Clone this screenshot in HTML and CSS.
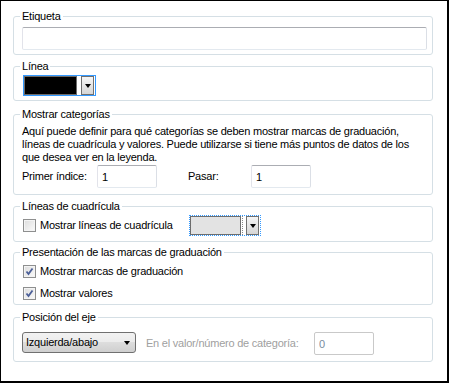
FILE: index.html
```html
<!DOCTYPE html>
<html lang="es">
<head>
    <meta charset="UTF-8">
    <title>Propiedades del eje</title>
    <link rel="stylesheet" href="styles.css">
</head>
<body>
    <div class="window">
        <fieldset class="group group-label">
            <legend>Etiqueta</legend>
            <input class="text-field wide" type="text">
        </fieldset>

        <fieldset class="group group-line">
            <legend>Línea</legend>
            <div class="color-combo active">
                <span class="swatch black"></span>
                <span class="drop-btn"><span class="arrow"></span></span>
            </div>
        </fieldset>

        <fieldset class="group group-categories">
            <legend>Mostrar categorías</legend>
            <p class="desc">Aquí puede definir para qué categorías se deben mostrar marcas de graduación,<br>líneas de cuadrícula y valores. Puede utilizarse si tiene más puntos de datos de los<br>que desea ver en la leyenda.</p>
            <div class="index-row">
                <span class="field-label first">Primer índice:</span>
                <input class="text-field small" type="text" value="1">
                <span class="field-label skip">Pasar:</span>
                <input class="text-field small" type="text" value="1">
            </div>
        </fieldset>

        <fieldset class="group group-grid">
            <legend>Líneas de cuadrícula</legend>
            <div class="grid-row">
                <label class="check grid-check"><span class="box"></span>Mostrar líneas de cuadrícula</label>
                <div class="color-combo dotted">
                    <span class="swatch gray"></span>
                    <span class="sep"></span>
                    <span class="drop-btn"><span class="arrow"></span></span>
                </div>
            </div>
        </fieldset>

        <fieldset class="group group-ticks">
            <legend>Presentación de las marcas de graduación</legend>
            <label class="check"><span class="box"><svg width="11" height="11" viewBox="0 0 11 11"><path d="M2.5 5.5 L4.5 8 L8.5 2.5" fill="none" stroke="#4b5f98" stroke-width="1.8"/></svg></span>Mostrar marcas de graduación</label>
            <label class="check"><span class="box"><svg width="11" height="11" viewBox="0 0 11 11"><path d="M2.5 5.5 L4.5 8 L8.5 2.5" fill="none" stroke="#4b5f98" stroke-width="1.8"/></svg></span>Mostrar valores</label>
        </fieldset>

        <fieldset class="group group-axis">
            <legend>Posición del eje</legend>
            <div class="axis-row">
                <div class="select">Izquierda/abajo<span class="arrow"></span></div>
                <span class="disabled-label">En el valor/número de categoría:</span>
                <input class="text-field small disabled" type="text" value="0" disabled>
            </div>
        </fieldset>
    </div>
</body>
</html>
```

FILE: styles.css
```css
body {
    margin: 0;
    font-family: "Liberation Sans", Arial, sans-serif;
    font-size: 11px;
    line-height: 13px;
    letter-spacing: -0.22px;
    color: #000;
    background: #fff;
}

.window {
    box-sizing: border-box;
    width: 449px;
    height: 383px;
    border: solid #000;
    border-width: 1px 2px 2px 1px;
    padding: 9px 0 0 12px;
    background: #fff;
}

.group {
    box-sizing: border-box;
    width: 420px;
    min-width: 0;
    margin: 5px 0 0 0;
    border: 1px solid #d5dfe5;
    border-radius: 3px;
    padding: 0 5px 4px 8px;
}

.group legend {
    padding: 0 2px;
    margin-left: -2px;
    line-height: 13px;
}

.group-label { margin-top: 0; padding-top: 4px; }
.group-line { padding-top: 2px; }
.group-categories { margin-top: 7px; padding-top: 4px; padding-bottom: 6px; }
.group-grid { padding-top: 2px; padding-bottom: 5px; }
.group-ticks { margin-top: 4px; padding-top: 3px; padding-bottom: 2px; }
.group-axis { margin-top: 6px; padding-top: 8px; padding-bottom: 6px; }

/* campos de texto */
.text-field {
    box-sizing: border-box;
    height: 23px;
    margin: 0;
    padding: 0 4px;
    border: 1px solid;
    border-color: #abadb3 #dbdfe6 #e3e9ef #e2e3ea;
    border-radius: 2px;
    font-family: inherit;
    font-size: 11px;
    letter-spacing: inherit;
    color: #000;
    background: #fff;
    outline: none;
}

.text-field.wide { display: block; width: 405px; }
.text-field.small { width: 60px; flex-shrink: 0; }
.text-field.disabled { border-color: #c9c9c9; color: #7a8ca0; }

/* combo de color */
.color-combo {
    box-sizing: border-box;
    display: flex;
    align-items: stretch;
    flex-shrink: 0;
    width: 73px;
    height: 21px;
    padding: 0 1px 0 0;
    border: 1px solid #3399ff;
}

.color-combo.active { margin-left: 1px; }
.color-combo.dotted { width: 72px; border-style: dotted; }

.swatch {
    flex: 1;
    border: 1px solid #6d6d6d;
}

.swatch.black { background: #000; }
.swatch.gray { background: #e3e3e3; }

.sep {
    width: 0;
    margin: 0 2px 0 1px;
    border-left: 1px dotted #888;
}

.drop-btn {
    display: flex;
    align-items: center;
    justify-content: center;
    width: 11px;
    margin-left: 4px;
    border: 1px solid #707070;
    background: linear-gradient(#f6f6f6, #d6d6d6);
}

.color-combo.dotted .drop-btn { margin-left: 1px; }

.arrow {
    width: 0;
    height: 0;
    border-left: 3px solid transparent;
    border-right: 3px solid transparent;
    border-top: 4px solid #000;
}

/* mostrar categorías */
.desc { margin: 0; white-space: nowrap; }

.index-row {
    display: flex;
    align-items: center;
    height: 23px;
    margin-top: 1px;
}

.field-label.first { width: 75px; }
.field-label.skip { width: 63px; margin-left: 31px; }

/* casillas */
.check {
    display: flex;
    align-items: center;
    height: 18px;
    white-space: nowrap;
}

.check + .check { margin-top: 4px; }

.box {
    box-sizing: border-box;
    display: flex;
    align-items: center;
    justify-content: center;
    flex-shrink: 0;
    width: 13px;
    height: 13px;
    margin: 0 4px 0 1px;
    border: 1px solid #8e8f8f;
    background: linear-gradient(135deg, #dcdcdc, #fbfbfb);
    box-shadow: inset 0 0 0 1px #f4f4f4;
}

.grid-row {
    display: flex;
    align-items: center;
    height: 21px;
}

.grid-check { width: 167px; flex-shrink: 0; }

/* posición del eje */
.axis-row {
    display: flex;
    align-items: flex-start;
    height: 23px;
}

.select {
    box-sizing: border-box;
    display: flex;
    align-items: center;
    justify-content: space-between;
    flex-shrink: 0;
    width: 114px;
    height: 21px;
    padding: 0 5px 0 3px;
    border: 1px solid #707070;
    border-radius: 3px;
    background: linear-gradient(#f2f2f2, #ebebeb 50%, #dddddd 50%, #cfcfcf);
}

.disabled-label {
    align-self: center;
    flex-shrink: 0;
    width: 157px;
    margin: 0 11px 0 10px;
    color: #a0a0a0;
    white-space: nowrap;
}
```
